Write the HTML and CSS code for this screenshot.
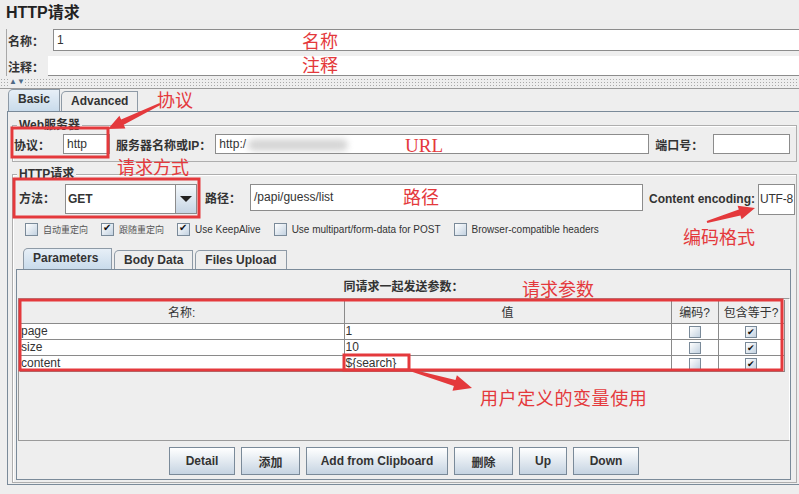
FILE: index.html
```html
<!DOCTYPE html>
<html lang="zh-CN">
<head>
    <meta charset="UTF-8">
    <title>HTTP请求</title>
    <link rel="stylesheet" href="styles.css">
</head>
<body>
    <div class="title">HTTP请求</div>

    <div class="fields">
        <div class="field-row name-row">
            <span class="label">名称：</span>
            <div class="text-input">1</div>
        </div>
        <div class="field-row comment-row">
            <span class="label">注释：</span>
            <div class="text-input flat"></div>
        </div>
    </div>

    <div class="splitter"><span class="split-arrows">▲▼</span></div>

    <div class="tabs">
        <div class="tab active">Basic</div>
        <div class="tab">Advanced</div>
    </div>

    <div class="panel">
        <div class="group web-group">
            <span class="group-title">Web服务器</span>
            <div class="row">
                <span class="label">协议：</span>
                <div class="text-input proto">http</div>
                <span class="label host-label">服务器名称或IP：</span>
                <div class="text-input host">http:/<span class="blur"></span></div>
                <span class="label port-label">端口号：</span>
                <div class="text-input port"></div>
            </div>
        </div>

        <div class="group http-group">
            <span class="group-title">HTTP请求</span>
            <div class="row method-row">
                <span class="label">方法：</span>
                <div class="combo">
                    <span class="combo-value">GET</span>
                    <span class="combo-btn"><span class="tri"></span></span>
                </div>
                <span class="label path-label">路径：</span>
                <div class="text-input path">/papi/guess/list</div>
                <span class="label enc-label">Content encoding:</span>
                <div class="text-input enc">UTF-8</div>
            </div>

            <div class="checks">
                <label class="check"><span class="box"></span><span class="cjk">自动重定向</span></label>
                <label class="check"><span class="box on"></span><span class="cjk">跟随重定向</span></label>
                <label class="check"><span class="box on"></span>Use KeepAlive</label>
                <label class="check"><span class="box"></span>Use multipart/form-data for POST</label>
                <label class="check"><span class="box"></span>Browser-compatible headers</label>
            </div>

            <div class="tabs inner-tabs">
                <div class="tab active">Parameters</div>
                <div class="tab">Body Data</div>
                <div class="tab">Files Upload</div>
            </div>

            <div class="inner-panel">
                <div class="params-title">同请求一起发送参数：</div>
                <div class="scroll-pane">
                    <table class="params">
                        <thead>
                            <tr>
                                <th class="c-name">名称:</th>
                                <th class="c-value">值</th>
                                <th class="c-enc">编码?</th>
                                <th class="c-eq">包含等于?</th>
                            </tr>
                        </thead>
                        <tbody>
                            <tr>
                                <td>page</td>
                                <td>1</td>
                                <td class="mid"><span class="box"></span></td>
                                <td class="mid"><span class="box on"></span></td>
                            </tr>
                            <tr>
                                <td>size</td>
                                <td>10</td>
                                <td class="mid"><span class="box"></span></td>
                                <td class="mid"><span class="box on"></span></td>
                            </tr>
                            <tr>
                                <td>content</td>
                                <td>${search}</td>
                                <td class="mid"><span class="box"></span></td>
                                <td class="mid"><span class="box on"></span></td>
                            </tr>
                        </tbody>
                    </table>
                </div>
                <div class="buttons">
                    <button class="btn w-detail">Detail</button>
                    <button class="btn w-add">添加</button>
                    <button class="btn w-clip">Add from Clipboard</button>
                    <button class="btn w-del">删除</button>
                    <button class="btn w-up">Up</button>
                    <button class="btn w-down">Down</button>
                </div>
            </div>
        </div>
    </div>

    <!-- red annotations drawn over the screenshot -->
    <svg class="marks" width="799" height="494" viewBox="0 0 799 494">
        <g fill="none" stroke="#e4393c" stroke-width="3">
            <rect x="12" y="128" width="96" height="29" />
            <rect x="14" y="179" width="185" height="38" />
            <rect x="20" y="300" width="762" height="70" />
            <rect x="344" y="355" width="65" height="15" />
        </g>
        <g fill="#e4393c">
            <polygon points="108,129 125.4,128.4 123.7,124.8 160.4,104.9 159.6,103.1 121.1,119.4 119.4,115.8" />
            <polygon points="755,208 741.6,219.2 740.4,215.4 707.3,223 706.7,221 738.8,209.6 737.6,205.8" />
            <polygon points="472,388 452.5,390.7 453.9,385.9 409.7,371 410.3,369 455.5,380.1 456.9,375.3" />
        </g>
    </svg>
    <span class="note n-name">名称</span>
    <span class="note n-comment">注释</span>
    <span class="note n-proto">协议</span>
    <span class="note n-method">请求方式</span>
    <span class="note n-url">URL</span>
    <span class="note n-path">路径</span>
    <span class="note n-enc">编码格式</span>
    <span class="note n-params">请求参数</span>
    <span class="note n-var">用户定义的变量使用</span>
</body>
</html>
```

FILE: styles.css
```css
* {
    margin: 0;
    padding: 0;
    box-sizing: border-box;
}

body {
    width: 799px;
    height: 494px;
    overflow: hidden;
    position: relative;
    background: #eeeeee;
    color: #333333;
    font-family: "Liberation Sans", "Noto Sans CJK SC", sans-serif;
    font-size: 12px;
}

.title {
    height: 28px;
    padding: 2px 0 0 6px;
    font-size: 16px;
    font-weight: bold;
    line-height: 22px;
    color: #222222;
}

.label {
    font-weight: bold;
    white-space: nowrap;
    color: #333333;
}

.text-input {
    background: #ffffff;
    border: 1px solid #8c8c8c;
    padding-left: 3px;
    white-space: nowrap;
    overflow: hidden;
    color: #333333;
}

/* name / comment */
.fields {
    margin-left: 6px;
    border-left: 1px solid #a8a8a8;
}

.field-row {
    display: flex;
    align-items: center;
}

.field-row .label {
    padding-left: 1px;
}

.name-row {
    height: 22px;
    margin-top: 1px;
}

.name-row .label {
    width: 46px;
}

.name-row .text-input {
    flex: 1;
    height: 22px;
    line-height: 20px;
    border-right: none;
}

.comment-row {
    height: 20px;
    margin-top: 5px;
}

.comment-row .label {
    width: 41px;
}

.comment-row .text-input.flat {
    flex: 1;
    height: 20px;
    border: none;
    border-bottom: 1px solid #8c8c8c;
}

.splitter {
    height: 11px;
    margin-top: 2px;
    border-bottom: 1px solid #9a9a9a;
    background-image: radial-gradient(circle, #a9a9a9 0.7px, transparent 0.8px);
    background-size: 3px 3px;
    background-position: 0 3px;
    position: relative;
}

.split-arrows {
    position: absolute;
    left: 9px;
    top: 0;
    font-size: 8px;
    line-height: 8px;
    color: #4f6a86;
    background: #eeeeee;
    letter-spacing: 0;
}

/* tabs */
.tabs {
    display: flex;
    align-items: flex-end;
    height: 22px;
    padding-left: 8px;
}

.tab {
    height: 20px;
    padding: 0 9px;
    border: 1px solid #8e9aa6;
    border-bottom: none;
    border-top-left-radius: 5px;
    background: #eeeeee;
    font-weight: bold;
    line-height: 19px;
    color: #333333;
    margin-right: 1px;
}

.tab.active {
    height: 22px;
    background: linear-gradient(#e7eff7, #c9dbeb);
}

.panel {
    margin-left: 7px;
    height: 374px;
    border: 1px solid #7a8a99;
    border-right: none;
    padding: 13px 2px 0 4px;
}

.group {
    position: relative;
    border: 1px solid #aeaeae;
    box-shadow: inset 1px 1px 0 #ffffff;
}

.group-title {
    position: absolute;
    top: -8px;
    left: 4px;
    padding: 0 2px;
    background: #eeeeee;
    font-weight: bold;
    line-height: 14px;
    color: #333333;
}

.row {
    display: flex;
    align-items: center;
}

.web-group {
    height: 37px;
    padding: 8px 0 0 1px;
}

.web-group .row {
    height: 20px;
}

.proto {
    width: 47px;
    height: 20px;
    line-height: 18px;
    margin-left: 13px;
}

.host-label {
    margin-left: 6px;
}

.host {
    width: 434px;
    height: 20px;
    line-height: 18px;
    margin-left: 4px;
}

.blur {
    display: inline-block;
    width: 100px;
    height: 12px;
    vertical-align: middle;
    margin-left: 2px;
    background: #d6d6d6;
    border-radius: 6px;
    filter: blur(3px);
}

.port-label {
    margin-left: 6px;
}

.port {
    width: 77px;
    height: 20px;
    margin-left: 10px;
}

.http-group {
    margin-top: 12px;
    height: 309px;
    padding: 9px 0 0 6px;
}

.method-row {
    height: 30px;
    align-items: flex-start;
}

.method-row .label {
    line-height: 30px;
}

.combo {
    display: flex;
    width: 132px;
    height: 30px;
    margin-left: 10px;
    border: 1px solid #8c8c8c;
    background: #ffffff;
}

.combo-value {
    flex: 1;
    padding-left: 2px;
    line-height: 28px;
    font-weight: bold;
}

.combo-btn {
    width: 21px;
    border-left: 1px solid #8c8c8c;
    background: linear-gradient(#f4f8fb, #c6d5e4);
    display: flex;
    align-items: center;
    justify-content: center;
}

.tri {
    width: 0;
    height: 0;
    border-left: 6px solid transparent;
    border-right: 6px solid transparent;
    border-top: 6px solid #222222;
}

.path-label {
    margin-left: 8px;
}

.path {
    width: 393px;
    height: 27px;
    line-height: 25px;
    margin-left: 9px;
}

.enc-label {
    margin-left: 6px;
}

.enc {
    width: 37px;
    height: 31px;
    line-height: 29px;
    margin-left: 3px;
    padding-left: 1px;
    letter-spacing: -0.2px;
}

.checks {
    display: flex;
    align-items: center;
    height: 14px;
    margin-top: 8px;
    padding-left: 6px;
    font-size: 10px;
    color: #333333;
}

.check {
    display: flex;
    align-items: center;
    gap: 5px;
    margin-right: 13px;
}

.check .cjk {
    font-size: 9px;
    color: #555555;
}

.box {
    display: inline-block;
    width: 13px;
    height: 13px;
    border: 1px solid #7a8a99;
    background: linear-gradient(135deg, #ffffff, #c3d2e1);
    position: relative;
}

.box.on::after {
    content: "✔";
    position: absolute;
    left: 1px;
    top: -2px;
    font-size: 10px;
    color: #111111;
}

.inner-tabs {
    margin-top: 12px;
    padding-left: 4px;
    height: 21px;
}

.inner-tabs .tab {
    height: 19px;
    margin-right: 2px;
}

.inner-tabs .tab.active {
    height: 21px;
    width: 89px;
}

.inner-panel {
    margin: 0 5px 0 -3px;
    height: 211px;
    border: 1px solid #7a8a99;
}

.params-title {
    height: 28px;
    padding-top: 10px;
    text-align: center;
    font-weight: bold;
    line-height: 14px;
}

.scroll-pane {
    height: 143px;
    margin: 0 0 0 1px;
    border: 1px solid #9a9a9a;
    border-right-color: #ffffff;
    padding: 1px 0 0 1px;
}

.params {
    width: 764px;
    border-collapse: collapse;
    table-layout: fixed;
    background: #ffffff;
    font-size: 12px;
}

.params th {
    height: 23px;
    font-weight: normal;
    background: #eeeeee;
    border-right: 1px solid #8a8a8a;
    border-bottom: 1px solid #8a8a8a;
    color: #333333;
}

.params td {
    height: 16px;
    border-right: 1px solid #8a8a8a;
    border-bottom: 1px solid #8a8a8a;
    padding-left: 1px;
    line-height: 14px;
    white-space: nowrap;
    overflow: hidden;
}

.params .c-name { width: 324px; }
.params .c-value { width: 327px; }
.params .c-enc { width: 47px; }
.params .c-eq { width: 66px; }

.params .mid {
    text-align: center;
    padding: 0;
}

.params .box {
    width: 12px;
    height: 12px;
    vertical-align: middle;
}

.params .box.on::after {
    font-size: 9px;
    left: 1px;
    top: -2px;
}

.buttons {
    display: flex;
    justify-content: center;
    gap: 6px;
    margin-top: 6px;
    padding-left: 1px;
}

.btn {
    height: 28px;
    border: 1px solid #7a8a99;
    background: linear-gradient(#ffffff, #c6d4e2);
    font-family: "Liberation Sans", "Noto Sans CJK SC", sans-serif;
    font-size: 12px;
    font-weight: bold;
    color: #333333;
}

.w-detail { width: 66px; }
.w-add { width: 59px; }
.w-clip { width: 142px; }
.w-del { width: 59px; }
.w-up { width: 48px; }
.w-down { width: 66px; }

/* annotations */
.marks {
    position: absolute;
    left: 0;
    top: 0;
    pointer-events: none;
}

.note {
    position: absolute;
    color: #e4393c;
    font-family: "Noto Sans CJK SC", sans-serif;
    font-size: 18px;
    line-height: 20px;
    white-space: nowrap;
}

.n-name { left: 302px; top: 30px; }
.n-comment { left: 302px; top: 54px; }
.n-proto { left: 157px; top: 89px; }
.n-method { left: 117px; top: 156px; }
.n-url {
    left: 405px;
    top: 136px;
    font-family: "Liberation Serif", serif;
    font-size: 19px;
}
.n-path { left: 403px; top: 186px; }
.n-enc { left: 683px; top: 226px; }
.n-params { left: 522px; top: 278px; }
.n-var { left: 480px; top: 387px; letter-spacing: 0.6px; }
```
